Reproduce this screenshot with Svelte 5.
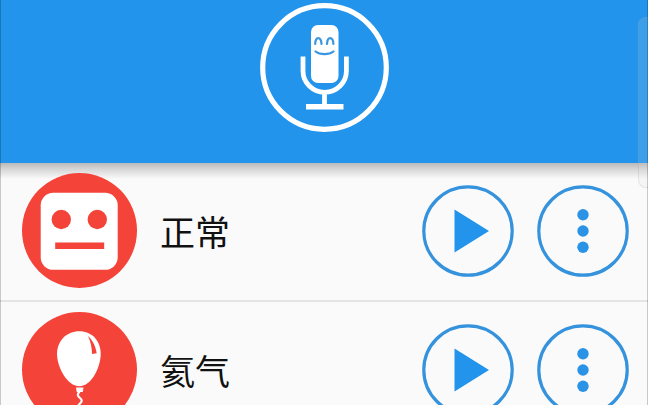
<script lang="ts">
	type Voice = { id: string; name: string };

	const voices: Voice[] = [
		{ id: 'normal', name: '正常' },
		{ id: 'helium', name: '氦气' }
	];

	let playing = $state<string | null>(null);
</script>

<div class="app">
	<header>
		<button type="button" class="record" aria-label="录音">
			<svg viewBox="0 0 129 129" aria-hidden="true">
				<circle cx="64.5" cy="64.5" r="61.8" fill="none" stroke="#fff" stroke-width="5.2" />
				<rect x="51" y="22" width="27.5" height="58" rx="7" fill="#fff" />
				<g fill="none" stroke="#3a97e0" stroke-width="2.2" stroke-linecap="round">
					<path d="M55.2 41c.3-7.8 5.8-7.8 6.3 0M67 41c.4-7.8 6-7.8 6.4 0" />
					<path d="M55.5 48.5c4.5 3.6 13.5 3.6 18 0" />
				</g>
				<path
					d="M43 53.5v14.5a21.7 21.3 0 0 0 43.4 0v-14.5M64.5 89v13"
					fill="none"
					stroke="#fff"
					stroke-width="4.8"
				/>
				<path d="M46 101h37.5v5.5h-37.5z" fill="#fff" />
			</svg>
		</button>
	</header>

	<ul class="voices">
		{#each voices as voice (voice.id)}
			<li>
				<svg class="avatar" viewBox="0 0 115 115" aria-hidden="true">
					<circle cx="57.5" cy="57.5" r="57.5" fill="#f44339" />
					{#if voice.id === 'normal'}
						<rect x="18.7" y="19.8" width="77" height="77" rx="12.5" fill="#fff" />
						<g fill="#f44339">
							<circle cx="39.3" cy="46.5" r="9.7" />
							<circle cx="75.3" cy="46.5" r="9.7" />
							<path d="M33.2 69.5h49v6.5h-49z" />
						</g>
					{:else}
						<path
							d="M57.3 19.2c12.7 0 21.7 9.800 21.400 23.300-.3 13-9.200 31.700-21.400 31.700S35.400 55.500 35 42.500c-.3-13.500 9.600-23.300 22.300-23.300z"
							fill="#fff"
						/>
						<path d="M66 24c4.200 3.800 7.600 10 8.700 17.300l-4.700.7c0-6-1.200-12-4-18z" fill="#f44339" />
						<path d="M54 75.500h7.500l-.7 4.500h-6.100z" fill="#fff" />
						<path
							d="M57.500 79.500c-2.500 3-2 4.500.5 6.500s2.200 3.500-.5 6-1.500 4.500.5 6"
							fill="none"
							stroke="#fff"
							stroke-width="2.2"
						/>
					{/if}
				</svg>
				<span class="name">{voice.name}</span>
				<button
					type="button"
					class="round"
					aria-label="播放{voice.name}"
					aria-pressed={playing === voice.id}
					onclick={() => (playing = voice.id)}
				>
					<svg viewBox="0 0 92 92" aria-hidden="true">
						<circle cx="46" cy="46" r="44.2" fill="none" stroke="#3592dc" stroke-width="3.2" />
						<path d="M32.5 24.500v43L67 46z" fill="#2294ec" />
					</svg>
				</button>
				<button type="button" class="round" aria-label="{voice.name}更多选项">
					<svg viewBox="0 0 92 92" aria-hidden="true">
						<circle cx="46" cy="46" r="44.2" fill="none" stroke="#3592dc" stroke-width="3.2" />
						<g fill="#2b93e6">
							<circle cx="46" cy="29.7" r="5.7" />
							<circle cx="46" cy="46" r="5.7" />
							<circle cx="46" cy="62.3" r="5.7" />
						</g>
					</svg>
				</button>
			</li>
		{/each}
	</ul>

	<div class="edge-handle"></div>
</div>

<style>
	:global(body) {
		margin: 0;
		background: #fafafa;
	}
	.app {
		position: relative;
		box-sizing: border-box;
		height: 100vh;
		overflow: hidden;
		background: #fafafa;
		font-family: 'Noto Sans CJK SC', sans-serif;
	}
	/* thin frame at both sides of the screen */
	.app::after {
		content: '';
		position: absolute;
		inset: 0;
		border: solid rgba(0, 0, 0, 0.2);
		border-width: 0 1px;
		pointer-events: none;
	}
	header {
		position: relative;
		display: flex;
		justify-content: center;
		padding: 3px 0 31px;
		background: #2294ec;
	}
	/* soft shadow below the bar */
	header::after {
		content: '';
		position: absolute;
		top: 100%;
		left: 0;
		right: 0;
		height: 16px;
		background: linear-gradient(rgba(0, 0, 0, 0.26), rgba(0, 0, 0, 0.14) 40%, rgba(0, 0, 0, 0));
		pointer-events: none;
	}
	button {
		flex: none;
		display: block;
		padding: 0;
		border: none;
		border-radius: 50%;
		background: none;
		cursor: pointer;
	}
	svg {
		display: block;
	}
	.record svg {
		width: 129px;
		height: 129px;
	}
	.voices {
		margin: 0;
		padding: 0;
		list-style: none;
	}
	li {
		display: flex;
		align-items: center;
		gap: 23px;
		padding: 10px 19px 12px 22px;
		border-bottom: 2px solid #e4e4e4;
	}
	.avatar {
		position: relative;
		flex: none;
		width: 115px;
		height: 115px;
	}
	.name {
		flex: 1;
		font-size: 35px;
		line-height: 48px;
		color: #111;
	}
	.round svg {
		width: 92px;
		height: 92px;
	}
	.edge-handle {
		position: absolute;
		top: 17px;
		right: 0;
		box-sizing: border-box;
		width: 10px;
		height: 171px;
		border: 1px solid rgba(150, 150, 150, 0.2);
		border-right: none;
		border-radius: 8px 0 0 8px;
		background: rgba(220, 220, 220, 0.15);
	}
</style>
